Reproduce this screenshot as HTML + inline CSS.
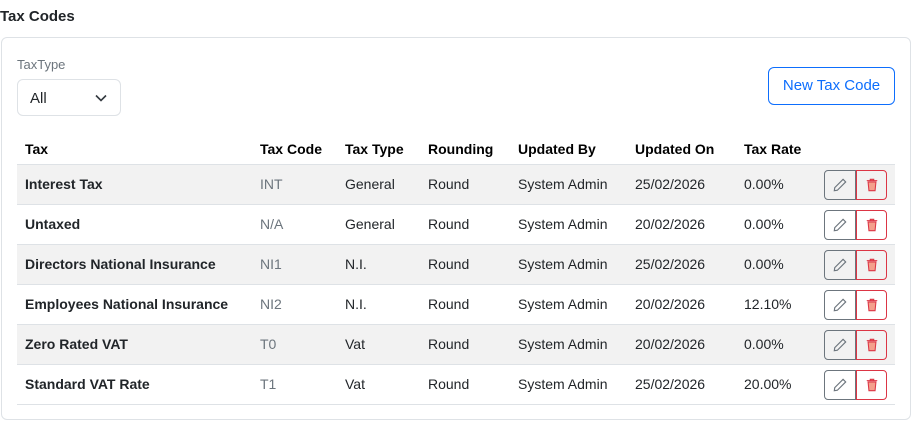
<!DOCTYPE html>
<html><head><style>
body{margin:0;width:917px;height:430px;background:#fff;font-family:"Liberation Sans",sans-serif;color:#212529;position:relative;overflow:hidden}
.abs{position:absolute}
h1{position:absolute;left:0;top:8px;margin:0;font-size:15px;font-weight:bold;color:#212529}
.card{position:absolute;left:1px;top:37px;width:910px;height:383px;border:1px solid #dee2e6;border-radius:6px;box-sizing:border-box}
.lbl{left:17px;top:57px;font-size:13px;color:#6c757d}
.sel{left:17px;top:79px;width:104px;height:37px;border:1px solid #dee2e6;border-radius:6px;box-sizing:border-box}
.sel span{position:absolute;left:12px;top:10px;font-size:15px}
.new{left:768px;top:67px;width:127px;height:38px;border:1px solid #0d6efd;border-radius:6px;box-sizing:border-box;color:#0d6efd;font-size:15px;text-align:center;line-height:36px}
.row{position:absolute;left:17px;width:878px;height:40px;border-bottom:1px solid #dee2e6;box-sizing:border-box;font-size:14px}
.row.g{background:#f2f2f2}
.row div{position:absolute;top:0;line-height:39px;white-space:nowrap}
.hd{font-weight:bold}
.c1{left:8px;font-weight:bold}.c2{left:243px;color:#6c757d}.c3{left:328px}.c4{left:411px}.c5{left:501px}.c6{left:618px}.c7{left:727px}
.hd div{color:#000!important}
.b1{left:807px!important;top:5px!important;width:32px;height:30px;border:1px solid #6c757d;border-radius:4px 0 0 4px;box-sizing:border-box}
.b2{left:839px!important;top:5px!important;width:31px;height:30px;border:1px solid #dc3545;border-radius:0 4px 4px 0;box-sizing:border-box}
.b1 svg,.b2 svg{position:absolute;left:8px;top:7px}
</style></head><body>
<h1>Tax Codes</h1>
<div class="card"></div>
<div class="abs lbl">TaxType</div>
<div class="abs sel"><span>All</span><svg class="abs" style="left:77px;top:14px" width="12" height="8" viewBox="0 0 12 8"><path d="M1 1.5l5 5 5-5" fill="none" stroke="#343a40" stroke-width="1.6"/></svg></div>
<div class="abs new">New Tax Code</div>
<div class="row hd" style="top:132px;height:33px"><div class="c1" style="line-height:34px">Tax</div><div class="c2" style="line-height:34px">Tax Code</div><div class="c3" style="line-height:34px">Tax Type</div><div class="c4" style="line-height:34px">Rounding</div><div class="c5" style="line-height:34px">Updated By</div><div class="c6" style="line-height:34px">Updated On</div><div class="c7" style="line-height:34px">Tax Rate</div></div>

<div class="row g" style="top:165px"><div class="c1">Interest Tax</div><div class="c2">INT</div><div class="c3">General</div><div class="c4">Round</div><div class="c5">System Admin</div><div class="c6">25/02/2026</div><div class="c7">0.00%</div><div class="b1"><svg width="14" height="14" viewBox="0 0 16 16"><path d="M11.5 1.5l3 3L5 14l-3.5.5L2 11z" fill="none" stroke="#6c757d" stroke-width="1.3"/></svg></div><div class="b2"><svg width="14" height="14" viewBox="0 0 16 16"><path d="M2 3h12M6 3V1.5h4V3M3.5 4.5h9l-1 10h-7z" fill="#f4a08c" stroke="#dc3545" stroke-width="1.2"/></svg></div></div>
<div class="row" style="top:205px"><div class="c1">Untaxed</div><div class="c2">N/A</div><div class="c3">General</div><div class="c4">Round</div><div class="c5">System Admin</div><div class="c6">20/02/2026</div><div class="c7">0.00%</div><div class="b1"><svg width="14" height="14" viewBox="0 0 16 16"><path d="M11.5 1.5l3 3L5 14l-3.5.5L2 11z" fill="none" stroke="#6c757d" stroke-width="1.3"/></svg></div><div class="b2"><svg width="14" height="14" viewBox="0 0 16 16"><path d="M2 3h12M6 3V1.5h4V3M3.5 4.5h9l-1 10h-7z" fill="#f4a08c" stroke="#dc3545" stroke-width="1.2"/></svg></div></div>
<div class="row g" style="top:245px"><div class="c1">Directors National Insurance</div><div class="c2">NI1</div><div class="c3">N.I.</div><div class="c4">Round</div><div class="c5">System Admin</div><div class="c6">25/02/2026</div><div class="c7">0.00%</div><div class="b1"><svg width="14" height="14" viewBox="0 0 16 16"><path d="M11.5 1.5l3 3L5 14l-3.5.5L2 11z" fill="none" stroke="#6c757d" stroke-width="1.3"/></svg></div><div class="b2"><svg width="14" height="14" viewBox="0 0 16 16"><path d="M2 3h12M6 3V1.5h4V3M3.5 4.5h9l-1 10h-7z" fill="#f4a08c" stroke="#dc3545" stroke-width="1.2"/></svg></div></div>
<div class="row" style="top:285px"><div class="c1">Employees National Insurance</div><div class="c2">NI2</div><div class="c3">N.I.</div><div class="c4">Round</div><div class="c5">System Admin</div><div class="c6">20/02/2026</div><div class="c7">12.10%</div><div class="b1"><svg width="14" height="14" viewBox="0 0 16 16"><path d="M11.5 1.5l3 3L5 14l-3.5.5L2 11z" fill="none" stroke="#6c757d" stroke-width="1.3"/></svg></div><div class="b2"><svg width="14" height="14" viewBox="0 0 16 16"><path d="M2 3h12M6 3V1.5h4V3M3.5 4.5h9l-1 10h-7z" fill="#f4a08c" stroke="#dc3545" stroke-width="1.2"/></svg></div></div>
<div class="row g" style="top:325px"><div class="c1">Zero Rated VAT</div><div class="c2">T0</div><div class="c3">Vat</div><div class="c4">Round</div><div class="c5">System Admin</div><div class="c6">20/02/2026</div><div class="c7">0.00%</div><div class="b1"><svg width="14" height="14" viewBox="0 0 16 16"><path d="M11.5 1.5l3 3L5 14l-3.5.5L2 11z" fill="none" stroke="#6c757d" stroke-width="1.3"/></svg></div><div class="b2"><svg width="14" height="14" viewBox="0 0 16 16"><path d="M2 3h12M6 3V1.5h4V3M3.5 4.5h9l-1 10h-7z" fill="#f4a08c" stroke="#dc3545" stroke-width="1.2"/></svg></div></div>
<div class="row" style="top:365px"><div class="c1">Standard VAT Rate</div><div class="c2">T1</div><div class="c3">Vat</div><div class="c4">Round</div><div class="c5">System Admin</div><div class="c6">25/02/2026</div><div class="c7">20.00%</div><div class="b1"><svg width="14" height="14" viewBox="0 0 16 16"><path d="M11.5 1.5l3 3L5 14l-3.5.5L2 11z" fill="none" stroke="#6c757d" stroke-width="1.3"/></svg></div><div class="b2"><svg width="14" height="14" viewBox="0 0 16 16"><path d="M2 3h12M6 3V1.5h4V3M3.5 4.5h9l-1 10h-7z" fill="#f4a08c" stroke="#dc3545" stroke-width="1.2"/></svg></div></div>
</body></html>
